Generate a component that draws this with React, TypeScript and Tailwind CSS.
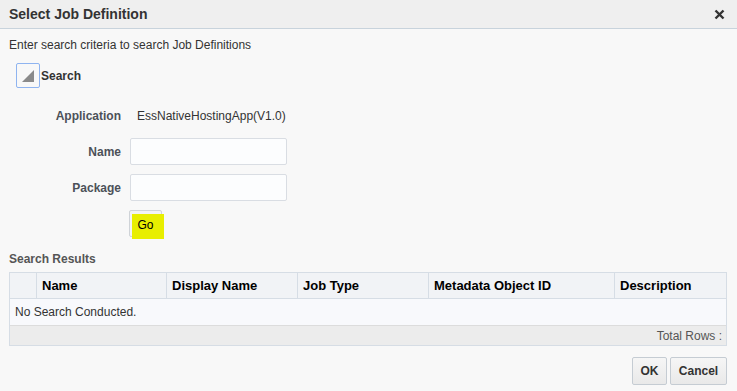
import React from "react";

const columns = [
  { label: "", width: "w-[27px]" },
  { label: "Name", width: "w-[130px]" },
  { label: "Display Name", width: "w-[131px]" },
  { label: "Job Type", width: "w-[131px]" },
  { label: "Metadata Object ID", width: "w-[186px]" },
  { label: "Description", width: "flex-1" },
];

const FieldRow: React.FC<{ label: string; children: React.ReactNode }> = ({
  label,
  children,
}) => (
  <div className="flex items-center h-[27px]">
    <div className="w-[112px] text-right text-[12px] font-bold text-[#4c5158]">
      {label}
    </div>
    <div className="ml-[9px] flex items-center">{children}</div>
  </div>
);

const App: React.FC = () => {
  return (
    <div className="w-[737px] h-[391px] bg-[#f8f8f8] flex flex-col font-['Liberation_Sans',Arial,sans-serif] text-[#333]">
      {/* title bar */}
      <div className="h-[29px] bg-[#efefef] border-b border-[#c8d3dc] flex items-center justify-between pl-[9px] pr-[12px]">
        <h1 className="text-[14px] font-bold text-[#333]">
          Select Job Definition
        </h1>
        <svg width="11" height="11" viewBox="0 0 11 11">
          <path
            d="M1.5 1.5 L9.5 9.5 M9.5 1.5 L1.5 9.5"
            stroke="#333"
            strokeWidth="2.4"
          />
        </svg>
      </div>

      <div className="flex flex-col pl-[9px] pr-[10px]">
        <p className="text-[12px] mt-[9px] leading-[14px] text-[#333]">
          Enter search criteria to search Job Definitions
        </p>

        <div className="flex items-center mt-[11px] ml-[7px]">
          <div className="w-[24px] h-[25px] border border-[#8fb4f0] rounded-[2px] flex items-end justify-center pb-[5px]">
            <svg width="12" height="12" viewBox="0 0 12 12">
              <polygon points="12,0 12,12 0,12" fill="#8a8a8a" />
            </svg>
          </div>
          <span className="text-[12px] font-bold text-[#333] ml-[1px]">
            Search
          </span>
        </div>

        <div className="flex flex-col gap-[9px] mt-[14px]">
          <FieldRow label="Application">
            <span className="text-[12px] text-[#333] ml-[7px]">
              EssNativeHostingApp(V1.0)
            </span>
          </FieldRow>
          <FieldRow label="Name">
            <input className="w-[157px] h-[27px] bg-[#fcfdfe] border border-[#d9dde3] rounded-[2px] outline-none" />
          </FieldRow>
          <FieldRow label="Package">
            <input className="w-[157px] h-[27px] bg-[#fcfdfe] border border-[#d9dde3] rounded-[2px] outline-none" />
          </FieldRow>
          <div className="flex h-[27px] pl-[120px]">
            <button className="relative w-[33px] h-[27px] border border-[#cfd3d8] rounded-[2px] bg-[#f3f3f3]">
              <span className="absolute left-[2px] top-[3px] w-[32px] h-[25px] bg-[#e8ee00]" />
              <span className="relative text-[12px] text-black">Go</span>
            </button>
          </div>
        </div>

        <div className="mt-[13px] text-[12px] font-bold text-[#555]">
          Search Results
        </div>

        <div className="mt-[4px] w-[718px] border border-[#d6dde5] bg-[#f8f9fc]">
          <div className="flex h-[26px] bg-[#f1f3f6] border-b border-[#d6dde5]">
            {columns.map((c, i) => (
              <div
                key={i}
                className={`${c.width} flex items-center pl-[5px] text-[13px] font-bold text-black ${
                  i < columns.length - 1 ? "border-r border-[#d6dde5]" : ""
                }`}
              >
                {c.label}
              </div>
            ))}
          </div>
          <div className="h-[26px] flex items-center pl-[5px] text-[12px] text-[#333]">
            No Search Conducted.
          </div>
          <div className="h-[20px] bg-[#ececec] border-t border-[#dcdcdc] flex items-center justify-end pr-[4px] text-[12px] text-[#555]">
            Total Rows :
          </div>
        </div>

        <div className="flex justify-end gap-[3px] mt-[11px]">
          <button className="w-[35px] h-[28px] border border-[#c5ccd3] rounded-[2px] bg-gradient-to-b from-[#f6f6f6] to-[#e9e9e9] text-[12px] font-bold text-[#333]">
            OK
          </button>
          <button className="w-[57px] h-[28px] border border-[#c5ccd3] rounded-[2px] bg-gradient-to-b from-[#f6f6f6] to-[#e9e9e9] text-[12px] font-bold text-[#333]">
            Cancel
          </button>
        </div>
      </div>
    </div>
  );
};

export default App;
